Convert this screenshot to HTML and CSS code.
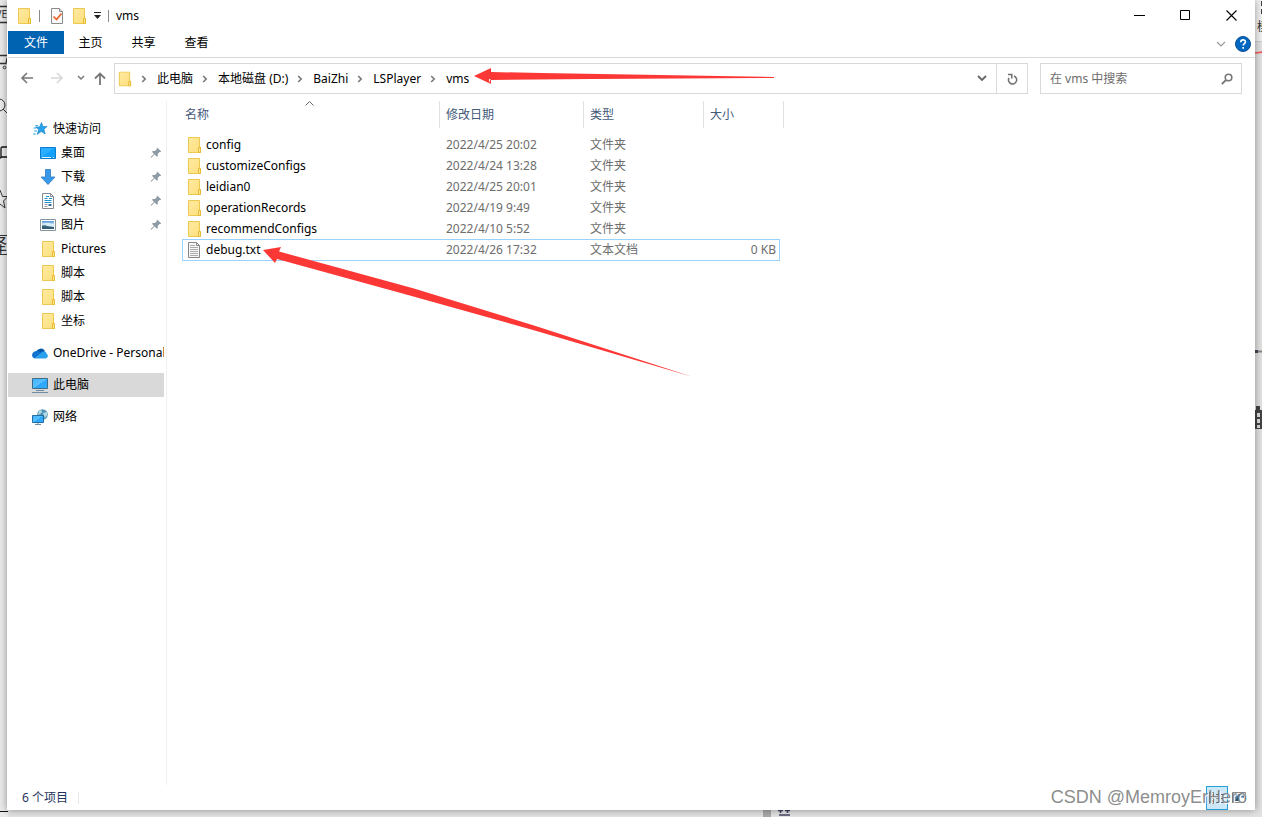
FILE: index.html
```html
<!DOCTYPE html>
<html lang="zh-CN">
<head>
<meta charset="utf-8">
<title>vms</title>
<link rel="stylesheet" href="styles.css">
</head>
<body>
<svg class="defs" aria-hidden="true">
  <defs>
    <linearGradient id="gf" x1="0" y1="0" x2="1" y2="1"><stop offset="0" stop-color="#ffeaa2"/><stop offset="1" stop-color="#ffdf7c"/></linearGradient>
    <linearGradient id="gb" x1="0" y1="0" x2="1" y2="1"><stop offset="0" stop-color="#3dafff"/><stop offset=".5" stop-color="#5cc2ff"/><stop offset=".5" stop-color="#2ea6fb"/><stop offset="1" stop-color="#32adff"/></linearGradient>
    <linearGradient id="gs" x1="0" y1="0" x2="0" y2="1"><stop offset="0" stop-color="#4f93d8"/><stop offset=".5" stop-color="#dbeef8"/><stop offset=".6" stop-color="#3e6878"/><stop offset="1" stop-color="#2c5a7c"/></linearGradient>
    <symbol id="folder" viewBox="0 0 16 16"><path d="M2.500.5h11v10h1v5h-12z" fill="url(#gf)" stroke="#ecc84e"/><path d="M12.500 15.500v-5h2v5z" fill="#ffe594" stroke="#e6bb33"/></symbol>
    <symbol id="pin" viewBox="0 0 12 12"><path d="M7.500.8l3.700 3.700-1 .7-.7-.1-1.800 2 .2 1.800-.9.900-2.400-2.200L1.300 10.700l-.6-.1v-.6L4 7 2 4.700l.9-.8 2 .1 1.900-1.800-.1-.7z" fill="#8f9aa2"/></symbol>
    <symbol id="chev" viewBox="0 0 8 8"><path d="M2.200 1l3 3-3 3" fill="none" stroke="#777" stroke-width="1.600"/></symbol>
  </defs>
</svg>

<div class="strip left" aria-hidden="true">
  <span class="frag ve">VE</span>
  <svg class="marks" width="8" height="817" fill="none" stroke="#333">
    <path d="M0 6.500h8M0 22.500h8M0 55.500h7M7 58l-1 5.500H0" stroke-width="1.300"/><circle cx="4.500" cy="67.500" r="1.300"/>
    <circle cx="-1" cy="105" r="6"/><path d="M3 109l5 5"/><path d="M8 147H2q-1 0-1 2v8q0 1-1 1M1 157h7" stroke="#111" stroke-width="1.300"/>
    <path d="M0 190l2.500 6.500H8L3.500 201l1.500 7-5-4M0 235.500h8M0 254.500h8"/><path d="M0 811.500h8" stroke="#111"/>
  </svg>
  <span class="frag yi">译</span>
</div>
<div class="strip right" aria-hidden="true">
  <span class="frag mo">模</span>
  <svg class="marks" width="8" height="817" fill="none">
    <path d="M7 1v5M7 9v5" stroke="#444" stroke-width="2"/><path d="M0 41.500h8" stroke="#ccc"/><path d="M0 53l8-1" stroke="#f55" stroke-width="1.500"/>
    <path d="M0 351.500h8" stroke="#888" stroke-width="2"/><path d="M0 351.500h3" stroke="#445" stroke-width="3"/>
    <path d="M1 406h4v4h3v19H0V410h1z" fill="#444"/><path d="M2 413h3v4H2zM2 419h3v4H2zM2 425h3v3H2z" fill="#dedede"/>
  </svg>
</div>
<svg class="below" width="40" height="7" aria-hidden="true"><path d="M0 0h8v7H0z" fill="#aaa"/><path d="M15 .5h5M22 .5h5M17.500 0v3M24.500 0v3M16 5h11" stroke="#446" stroke-width="1.500"/></svg>

<main class="window">
  <header class="title">
    <svg class="ic" viewBox="0 0 16 16"><use href="#folder"/></svg>
    <i class="bar"></i>
    <button class="quick" aria-label="属性"><svg class="ic" viewBox="0 0 16 16"><path d="M2.500.5h8l3 3v12h-11z" fill="#fafafa" stroke="#8b8b8b"/><path d="M10.500.5v3h3" fill="#ddd" stroke="#8b8b8b"/><path d="M4.500 8.500l3 3 5-6" fill="none" stroke="#e8622a" stroke-width="1.700"/></svg></button>
    <button class="quick" aria-label="新建文件夹"><svg class="ic" viewBox="0 0 16 16"><use href="#folder"/></svg></button>
    <button class="quick more" aria-label="自定义快速访问工具栏"><svg width="7" height="7"><path d="M0 .5h7" stroke="#222"/><path d="M0 3h7L3.500 7z" fill="#222"/></svg></button>
    <i class="bar"></i>
    <h1>vms</h1>
    <div class="controls">
      <button aria-label="最小化"><svg width="11" height="11"><path d="M0 5.500h11" stroke="#000"/></svg></button>
      <button aria-label="最大化"><svg width="11" height="11"><path d="M.5.5h9v9h-9z" fill="none" stroke="#000"/></svg></button>
      <button aria-label="关闭"><svg width="11" height="11"><path d="M.5.5l10 10M10.500.5l-10 10" stroke="#000" stroke-width="1.100"/></svg></button>
    </div>
  </header>

  <nav class="tabs">
    <button class="file">文件</button><button>主页</button><button>共享</button><button>查看</button>
    <div class="help">
      <button aria-label="展开功能区"><svg width="10" height="6"><path d="M1 1l4 4 4-4" fill="none" stroke="#999" stroke-width="1.200"/></svg></button>
      <button aria-label="帮助"><svg width="16" height="16"><circle cx="8" cy="8" r="7.500" fill="#0067c0" stroke="#0a4f96"/><path d="M5.800 6.200c0-3 4.600-2.900 4.600-.3 0 1.700-2.200 1.700-2.200 3.600M8.200 11v1.800" fill="none" stroke="#fff" stroke-width="1.700"/></svg></button>
    </div>
  </nav>

  <div class="address">
    <div class="moves">
      <button aria-label="后退"><svg width="14" height="12"><path d="M7 1L2 6l5 5M2 6h11" fill="none" stroke="#777" stroke-width="1.600"/></svg></button>
      <button aria-label="前进"><svg width="14" height="12"><path d="M7 1l5 5-5 5M12 6H1" fill="none" stroke="#d8d8d8" stroke-width="1.600"/></svg></button>
      <button class="narrow recent" aria-label="最近位置"><svg width="8" height="6"><path d="M1 1l3 3 3-3" fill="none" stroke="#777" stroke-width="1.500"/></svg></button>
      <button class="narrow" aria-label="上移"><svg width="12" height="13"><path d="M1 6.500l5-5 5 5M6 1.500V13" fill="none" stroke="#777" stroke-width="1.800"/></svg></button>
    </div>
    <div class="path">
      <svg class="ic" viewBox="0 0 16 16"><use href="#folder"/></svg>
      <svg class="chev"><use href="#chev"/></svg><a href="#">此电脑</a>
      <svg class="chev"><use href="#chev"/></svg><a href="#">本地磁盘 (D:)</a>
      <svg class="chev"><use href="#chev"/></svg><a href="#">BaiZhi</a>
      <svg class="chev"><use href="#chev"/></svg><a href="#">LSPlayer</a>
      <svg class="chev"><use href="#chev"/></svg><a href="#">vms</a>
      <button class="drop" aria-label="历史记录"><svg width="10" height="7"><path d="M1 1l4 4 4-4" fill="none" stroke="#666" stroke-width="1.800"/></svg></button>
      <button class="reload" aria-label="刷新"><svg width="11" height="12"><path d="M1 1.500h3.800V5.500M2 4.800A4.100 4.100 0 1 0 7 3" fill="none" stroke="#707070" stroke-width="1.500"/></svg></button>
    </div>
    <form class="search">
      <input type="text" aria-label="搜索" placeholder="在 vms 中搜索">
      <button type="button" aria-label="搜索"><svg width="12" height="12"><circle cx="7.500" cy="4.500" r="3.300" fill="none" stroke="#777" stroke-width="1.600"/><path d="M5 7L.8 11.200" stroke="#777" stroke-width="1.800"/></svg></button>
    </form>
  </div>

  <div class="body">
    <aside class="tree">
      <ul>
        <li class="top"><svg class="ic" viewBox="0 0 16 16"><path d="M9.500 1.500l1.500 4h4.200l-3.300 2.800 1.300 4.700-4-2.600-4 3 1.500-4.800-3.200-2.700h4z" fill="#27a2ea" stroke="#1680c4" stroke-width=".6"/><path d="M3.500 4.500H6M1.500 7H4M2 10h3M1 13h3" stroke="#3aa9e6"/></svg>快速访问</li>
        <li><svg class="ic" viewBox="0 0 16 16"><path d="M.5 2.500h15v11H.5z" fill="#12a0fa" stroke="#0a7bd0"/><path d="M1 13L14 3H1z" fill="#2baeff"/><path d="M2 12.500h9M13 12.500h1" stroke="#e6f6ff"/></svg>桌面<svg class="pin"><use href="#pin"/></svg></li>
        <li><svg class="ic" viewBox="0 0 16 16"><path d="M5.500.5h5v7.500h4.500l-7 7.500L1 8h4.500z" fill="#3a98e8" stroke="#2878c4" stroke-width=".8"/></svg>下载<svg class="pin"><use href="#pin"/></svg></li>
        <li><svg class="ic" viewBox="0 0 16 16"><path d="M2.500.5h8l3 3v12h-11z" fill="#fff" stroke="#808890"/><path d="M10.500.5v3h3" fill="none" stroke="#808890"/><path d="M6 3.500h3M4.500 5.500h3M9 5.500h3M4.500 7.500h7M4.500 9.500h7" stroke="#1f8fc8"/><path d="M4.500 11.500h3M4.500 13.500h3" stroke="#999"/><path d="M8.500 11h3v2h-3z" fill="#386f90"/></svg>文档<svg class="pin"><use href="#pin"/></svg></li>
        <li><svg class="ic" viewBox="0 0 16 16"><path d="M.5 2.500h15v11H.5z" fill="#fff" stroke="#87929b"/><path d="M2 4h12v8H2z" fill="url(#gs)"/><path d="M2 6q3 0 5 3l7 1V7q-3 0-5-1z" fill="#d9edf7"/></svg>图片<svg class="pin"><use href="#pin"/></svg></li>
        <li><svg class="ic" viewBox="0 0 16 16"><use href="#folder"/></svg>Pictures</li>
        <li><svg class="ic" viewBox="0 0 16 16"><use href="#folder"/></svg>脚本</li>
        <li><svg class="ic" viewBox="0 0 16 16"><use href="#folder"/></svg>脚本</li>
        <li><svg class="ic" viewBox="0 0 16 16"><use href="#folder"/></svg>坐标</li>
      </ul>
      <ul><li class="top"><svg class="ic" viewBox="0 0 16 16"><path d="M4 7a5 5 0 0 1 9-1l-4 4z" fill="#0358a7"/><path d="M3.500 6.200c2-.8 4 0 6 1.800L3 13.400C-1 13-1 7 3.500 6.200z" fill="#1173cf"/><path d="M9 8c2-2 5-2 5.500.5C16.500 10 16.500 13.400 13 13.400H3z" fill="#28a0ee"/></svg><span>OneDrive - Personal</span></li></ul>
      <ul><li class="top chosen"><svg class="ic" viewBox="0 0 16 16"><path d="M.5 1.500h15v10H.5z" fill="url(#gb)" stroke="#3b6d8b"/><path d="M4 13.500h8M0 15.500h16" stroke="#6f8ca5"/></svg>此电脑</li></ul>
      <ul><li class="top"><svg class="ic" viewBox="0 0 16 16"><circle cx="10.500" cy="5.500" r="5.300" fill="#5595b5"/><path d="M7 2q3-2 3 1l-2 2-2 1zM11 4l4-1v3l-2 3z" fill="#b7dbe5"/><path d="M.5 6.500h11v7H.5z" fill="url(#gb)" stroke="#236fa3"/><path d="M3 15.500h6M6 14v1" stroke="#6f8ca5"/></svg>网络</li></ul>
    </aside>
    <section class="files">
      <table>
        <colgroup><col class="c1"><col class="c2"><col class="c3"><col class="c4"><col class="c5"></colgroup>
        <thead><tr><th class="name">名称<svg class="sort" width="9" height="5"><path d="M.5 4.500l4-4 4 4" fill="none" stroke="#666"/></svg></th><th>修改日期</th><th>类型</th><th colspan="2">大小</th></tr></thead>
        <tbody>
          <tr><td><svg class="ic" viewBox="0 0 16 16"><use href="#folder"/></svg>config</td><td>2022/4/25 20:02</td><td>文件夹</td><td></td></tr>
          <tr><td><svg class="ic" viewBox="0 0 16 16"><use href="#folder"/></svg>customizeConfigs</td><td>2022/4/24 13:28</td><td>文件夹</td><td></td></tr>
          <tr><td><svg class="ic" viewBox="0 0 16 16"><use href="#folder"/></svg>leidian0</td><td>2022/4/25 20:01</td><td>文件夹</td><td></td></tr>
          <tr><td><svg class="ic" viewBox="0 0 16 16"><use href="#folder"/></svg>operationRecords</td><td>2022/4/19 9:49</td><td>文件夹</td><td></td></tr>
          <tr><td><svg class="ic" viewBox="0 0 16 16"><use href="#folder"/></svg>recommendConfigs</td><td>2022/4/10 5:52</td><td>文件夹</td><td></td></tr>
          <tr class="focus"><td><svg class="ic" viewBox="0 0 16 16"><path d="M2.500.5h8l3 3v12h-11z" fill="#f8f8f8" stroke="#858585"/><path d="M10.500.5v3h3" fill="none" stroke="#858585"/><path d="M4 3.500h5M4 5.500h8M4 7.500h8M4 9.500h8M4 11.500h8M4 13.500h8" stroke="#aaa"/></svg>debug.txt</td><td>2022/4/26 17:32</td><td>文本文档</td><td>0 KB</td></tr>
        </tbody>
      </table>
    </section>
  </div>

  <footer class="status">
    <span>6 个项目</span><i></i>
    <div class="views">
      <button class="on" aria-label="详细信息"><svg width="16" height="14"><path d="M.5 1.500h4v11h-4z" fill="#fff" stroke="#777"/><path d="M2 4h2M2 10h2" stroke="#b33"/><path d="M2 7h2" stroke="#345"/><path d="M7 3.500h3M12 3.500h3M7 7.500h3M12 7.500h3M7 11.500h3M12 11.500h3" stroke="#667"/></svg></button>
      <button aria-label="大图标"><svg width="14" height="12"><path d="M.5.500h13v10H.5z" fill="#fff" stroke="#888"/><path d="M2 2h10v4l-5-1-5 4z" fill="#4b82b4"/><path d="M2 9l4-4 2 2v2z" fill="#28566d"/></svg></button>
    </div>
  </footer>

  <svg class="arrows" width="780" height="390" fill="#fb3836" aria-hidden="true">
    <path d="M466 76l17-8v4l50 1 233 4v1l-183 1-100 1v-1l-2 0v4l2-5v2H483v4z"/>
    <path d="M255 250l18-3-2 4.500 135 37 120 37 159 51.500-160-47-125-35-131-36-2 4z"/>
  </svg>
  <div class="mark">CSDN @MemroyErHero</div>
</main>
</body>
</html>
```
FILE: styles.css
```css
* { box-sizing: border-box; }
body {
  margin: 0;
  height: 100vh;
  padding: 0 7px 7px;
  position: relative;
  overflow: hidden;
  background: #e4e4e4;
  color: #000;
  font: 12px/16px "Noto Sans", "Noto Sans CJK SC", sans-serif;
}
button { border: 0; padding: 0; background: none; font: inherit; color: inherit; display: flex; align-items: center; justify-content: center; }
svg { display: block; flex: none; }
ul { margin: 0; padding: 0; list-style: none; }
a { color: inherit; text-decoration: none; }
.defs { position: absolute; width: 0; height: 0; }
.ic { width: 16px; height: 16px; }

.strip { position: absolute; top: 0; bottom: 0; width: 8px; overflow: hidden; background: #ebebeb; }
.left { left: 0; }
.right { right: 0; width: 7px; background: linear-gradient(#f2f2f2 41px, #e2e2e2 41px); }
.marks { position: absolute; left: 0; top: 0; }
.frag { position: absolute; white-space: nowrap; color: #333; }
.ve { right: 1px; top: 6px; font-size: 10px; }
.yi { right: 1px; top: 235px; font-size: 18px; line-height: 20px; }
.mo { left: 2px; top: 19px; }
.below { position: absolute; left: 763px; bottom: 0; }

.window {
  position: relative;
  height: 100%;
  display: flex;
  flex-direction: column;
  border-left: 1px solid #fff;
  background: #fff;
  box-shadow: 0 0 8px rgba(0, 0, 0, .4);
}
.title { display: flex; align-items: center; height: 31px; padding-left: 8px; }
.title .bar { width: 1px; height: 12px; margin: 0 9px 0 7px; background: #8a8a8a; }
.title .quick { margin-right: 6px; }
.title .quick.more { width: 8px; margin: 0; }
.title .more + .bar { margin-right: 7px; }
.title h1 { margin: 0; font-size: 12px; font-weight: 400; }
.controls { display: flex; margin-left: auto; padding-right: 1px; align-self: stretch; }
.controls button { width: 46px; }

.tabs { display: flex; height: 27px; padding-bottom: 3px; border-bottom: 1px solid #d9d9d9; }
.tabs > button { width: 53px; padding-top: 1px; }
.tabs .file { width: 56px; background: #0063b1; color: #fff; }
.help { display: flex; gap: 9px; margin-left: auto; padding: 2px 4px 0 0; align-items: center; }

.address { display: flex; height: 40px; padding: 5px 13px 5px 0; }
.moves { display: flex; align-items: center; width: 106px; padding-left: 4px; }
.moves button { width: 30px; height: 30px; }
.moves .narrow { width: 20px; }
.moves .recent { width: 18px; }
.path { display: flex; align-items: center; flex: 1; height: 31px; padding-left: 2px; border: 1px solid #d9d9d9; white-space: nowrap; }
.path .ic { width: 15px; }
.chev { width: 8px; height: 8px; margin: 0 9px 0 8px; }
.drop { width: 28px; height: 100%; margin-left: auto; }
.reload { width: 31px; height: 100%; border-left: 1px solid #d9d9d9; }
.search { display: flex; width: 202px; height: 31px; margin: 0 0 0 12px; border: 1px solid #d9d9d9; }
.search input { flex: 1; min-width: 0; padding: 0 0 0 9px; border: 0; outline: 0; font: inherit; }
.search input::placeholder { color: #6d6d6d; opacity: 1; }
.search button { width: 28px; }

.body { display: flex; flex: 1; min-height: 0; padding-top: 3px; }
.tree { display: flex; flex-direction: column; gap: 8px; width: 159px; padding: 16px 2px 0 0; border-right: 1px solid #f0f0f0; }
.tree li { display: flex; align-items: center; gap: 5px; height: 24px; padding: 0 2px 0 32px; white-space: nowrap; }
.tree li.top { padding: 0 0 0 24px; overflow: hidden; }
.tree .chosen { background: #d9d9d9; }
.pin { width: 12px; height: 12px; margin-left: auto; }
.files { flex: 1; padding-left: 15px; }
table { width: 602px; border-collapse: separate; border-spacing: 0; table-layout: fixed; }
.c1 { width: 258px; }
.c2 { width: 144px; }
.c3 { width: 120px; }
.c4 { width: 76px; }
.c5 { width: 4px; }
th { height: 27px; padding: 0 6px; border-right: 1px solid #e2e2e2; color: #43597a; font-weight: 400; text-align: left; }
th.name { position: relative; padding-left: 3px; }
.sort { position: absolute; left: 123px; top: 0; }
tbody::before { content: ""; display: block; height: 6px; }
td { height: 21px; padding: 0 6px; color: #6d6d6d; }
td:first-child { display: flex; align-items: center; gap: 4px; padding-left: 4px; color: #000; }
td:nth-child(4) { padding-right: 3px; text-align: right; }
.focus td { height: 22px; border: solid #99d1ff; border-width: 1px 0; }
.focus td:first-child { border-left-width: 1px; padding-left: 3px; }
.focus td:last-child { border-right-width: 1px; }

.status { display: flex; align-items: center; height: 25px; padding-left: 14px; color: #1f3560; }
.status i { width: 1px; height: 12px; margin-left: 10px; background: #e8e8e8; }
.views { display: flex; gap: 4px; margin-left: auto; padding-right: 9px; align-items: center; }
.views .on { width: 22px; height: 24px; border: 1px solid #26a0da; background: #cce8f7; }

.arrows { position: absolute; left: 0; top: 0; pointer-events: none; }
.mark { position: absolute; right: 8px; bottom: 2px; color: rgba(110, 110, 110, .8); text-shadow: 1px 1px #fff; font: 18px/22px "Liberation Sans", sans-serif; pointer-events: none; }
```
